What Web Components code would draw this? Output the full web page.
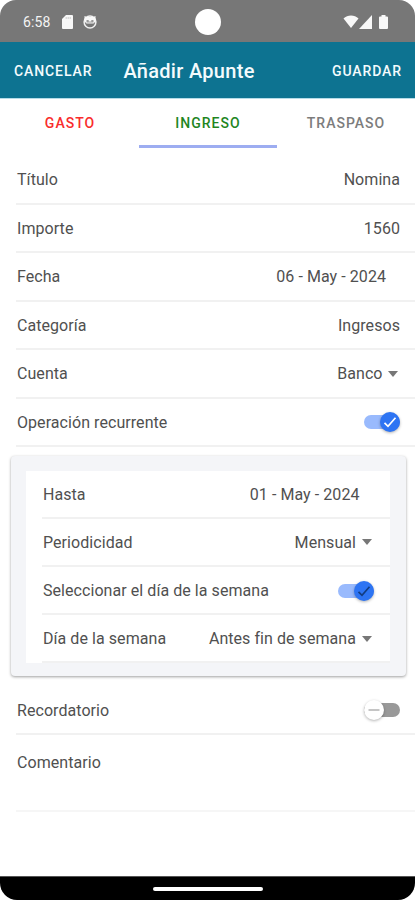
<!DOCTYPE html>
<html lang="es">
<head>
<meta charset="utf-8">
<title>Añadir Apunte</title>
<style>
  body {
    margin: 0;
    background: #fff;
    font-family: Roboto, sans-serif;
  }
</style>
</head>
<body>
<entry-page></entry-page>

<script>
customElements.define('status-bar', class StatusBar extends HTMLElement {
  constructor() {
    super();
    this.attachShadow({mode: 'open'});
    this.shadowRoot.innerHTML = this.template;
  }

  get template() {
    return `
<style>
  :host {
    display: grid;
    grid-template-columns: 1fr 26px 1fr;
    align-items: center;
    box-sizing: border-box;
    height: 42px;
    padding: 1px 26px 0 23px;
    background: #777;
    color: #f4f4f4;
    border-radius: 16px 16px 0 0;
  }
  .left, .right {
    display: flex;
    align-items: center;
  }
  .right {
    justify-content: flex-end;
  }
  time {
    font-size: 14px;
    letter-spacing: .1px;
    width: 39px;
  }
  i {
    width: 26px;
    height: 26px;
    margin-left: 2px;
    border-radius: 50%;
    background: #fff;
  }
  svg {
    display: block;
    fill: #f8f8f8;
  }
</style>
<div class="left">
  <time>6:58</time>
  <svg width="11" height="14" viewBox="0 0 11 14"><path d="M4 0h6a1 1 0 0 1 1 1v12a1 1 0 0 1-1 1H1a1 1 0 0 1-1-1V4z"/><path d="M4.200 2v2M6.200 2v2M8.200 2v2" stroke="#bbb" stroke-width=".7"/></svg>
  <svg style="margin-left: 10px" width="14" height="14" viewBox="0 0 14 14"><circle cx="7" cy="7" r="5.900" fill="none" stroke="#f0f0f0" stroke-width="1.500"/><path d="M1.500 1l2.500 1h6l2.500-1v5.500l-2 2h-7l-2-2z"/><path d="M3.500 5h2.200v1.500h2.600V5h2.200v2.500h-7z" fill="#999"/></svg>
</div>
<i></i>
<div class="right">
  <svg width="16" height="14" viewBox="0 0 16 14"><path d="M.5 3.500C4.500-.4 11.500-.4 15.500 3.500L8 13z"/></svg>
  <svg width="13" height="14" viewBox="0 0 13 14"><path d="M13 0v14H0z"/></svg>
  <svg style="margin: 0 1px 0 7px" width="9" height="14" viewBox="0 0 9 14"><path d="M2.500 0h4v1.500H8a1 1 0 0 1 1 1V13a1 1 0 0 1-1 1H1a1 1 0 0 1-1-1V2.500a1 1 0 0 1 1-1h1.500z"/></svg>
</div>
    `
  }
});

customElements.define('title-bar', class TitleBar extends HTMLElement {
  constructor() {
    super();
    this.attachShadow({mode: 'open'});
    this.shadowRoot.innerHTML = this.template;
  }

  get template() {
    return `
<style>
  :host {
    display: flex;
    align-items: center;
    box-sizing: border-box;
    height: 57px;
    padding: 2px 13px 0 14px;
    background: #0d7391;
    border-bottom: 1px solid #b5dce8;
    color: #f4fbfd;
    font-size: 14px;
    font-weight: 500;
    letter-spacing: .9px;
  }
  h1 {
    flex: 1;
    margin: 0 0 0 31px;
    font-size: 20px;
    font-weight: 500;
    letter-spacing: .3px;
  }
</style>
<slot name="start"></slot>
<h1><slot></slot></h1>
<slot name="end"></slot>
    `
  }
});

customElements.define('segment-button', class SegmentButton extends HTMLElement {
  constructor() {
    super();
    this.attachShadow({mode: 'open'});
    this.shadowRoot.innerHTML = this.template;
  }

  get template() {
    return `
<style>
  :host {
    flex: 1;
    display: flex;
    align-items: center;
    justify-content: center;
    box-sizing: border-box;
    padding-top: 2px;
    border-bottom: 3px solid transparent;
    color: #7c7c7c;
    font-size: 14px;
    font-weight: 500;
    letter-spacing: 1px;
  }
  :host([checked]) {
    border-color: #9dadf1;
  }
  :host([color="red"]) {
    color: #f92c2c;
  }
  :host([color="green"]) {
    color: #1f861f;
  }
</style>
<slot></slot>
    `
  }
});

customElements.define('toggle-switch', class ToggleSwitch extends HTMLElement {
  constructor() {
    super();
    this.attachShadow({mode: 'open'});
    this.shadowRoot.innerHTML = this.template;
  }

  get template() {
    return `
<style>
  :host {
    display: flex;
    align-items: center;
    width: 36px;
    height: 14px;
    border-radius: 7px;
    background: #999;
    --mark: #bbb;
  }
  .knob {
    width: 20px;
    height: 20px;
    flex: none;
    border-radius: 50%;
    background: #fff;
    box-shadow: 0 1px 3px rgba(0,0,0,.3);
  }
  :host([checked]) {
    justify-content: flex-end;
    background: #99bafd;
    --mark: #fff;
  }
  :host([checked]) .knob {
    background: #2d74f3;
  }
  :host([dark]) {
    --mark: #123c80;
  }
  svg {
    display: block;
    fill: none;
    stroke: var(--mark);
    stroke-width: 1.7;
  }
</style>
<div class="knob">
  <svg width="20" height="20" viewBox="0 0 20 20"><path d="${this.hasAttribute('checked') ? 'M4.500 10.800l3.500 3.500 7.500-8.600' : 'M4.500 10h11'}"/></svg>
</div>
    `
  }
});

customElements.define('form-row', class FormRow extends HTMLElement {
  constructor() {
    super();
    this.attachShadow({mode: 'open'});
    this.shadowRoot.innerHTML = this.template;
  }

  get template() {
    return `
<style>
  :host {
    display: flex;
    align-items: center;
    justify-content: space-between;
    box-sizing: border-box;
    height: 48.5px;
    margin-left: 16px;
    padding: 1px var(--row-end, 15px) 0 1px;
    border-bottom: 2px solid #f1f1f1;
    color: #505050;
    font-size: 16px;
    letter-spacing: .06px;
  }
  :host([date]) {
    padding-right: calc(var(--row-end, 15px) + 14px);
  }
  :host([tall]) {
    height: 77px;
    align-items: flex-start;
    padding-top: 18px;
    border-color: #f6f6f6;
  }
  .value {
    display: flex;
    align-items: center;
  }
  svg {
    display: none;
    margin: 0 2px 0 5.5px;
    fill: #777;
  }
  :host([select]) svg {
    display: block;
  }
</style>
<span>${this.getAttribute('label')}</span>
<span class="value"><slot></slot><svg width="10" height="6" viewBox="0 0 10 6"><path d="M0 0h10L5 6z"/></svg></span>
    `
  }
});

customElements.define('form-card', class FormCard extends HTMLElement {
  constructor() {
    super();
    this.attachShadow({mode: 'open'});
    this.shadowRoot.innerHTML = this.template;
  }

  get template() {
    return `
<style>
  :host {
    display: block;
    margin: 8.5px 9px 10.3px 11px;
    padding: 15px 16px 13px 15px;
    background: #f4f5f8;
    border-radius: 4px;
    box-shadow: 0 1px 3px rgba(0,0,0,.38);
    --row-end: 16.5px;
  }
  div {
    display: flex;
    flex-direction: column;
    justify-content: flex-end;
    height: 192.7px;
    background: #fff;
    overflow: hidden;
  }
</style>
<div><slot></slot></div>
    `
  }
});

customElements.define('navigation-bar', class NavigationBar extends HTMLElement {
  constructor() {
    super();
    this.attachShadow({mode: 'open'});
    this.shadowRoot.innerHTML = this.template;
  }

  get template() {
    return `
<style>
  :host {
    display: flex;
    align-items: center;
    justify-content: center;
    box-sizing: border-box;
    height: 24px;
    border-top: 1px solid #555;
    background: #000;
    border-radius: 0 0 17px 17px;
  }
  i {
    width: 110px;
    height: 4px;
    border-radius: 2px;
    background: #fff;
  }
</style>
<i></i>
    `
  }
});

customElements.define('entry-page', class EntryPage extends HTMLElement {
  constructor() {
    super();
    this.attachShadow({mode: 'open'});
    this.shadowRoot.innerHTML = this.template;
  }

  get template() {
    return `
<style>
  :host {
    display: flex;
    flex-direction: column;
    width: 415px;
    height: 900px;
    overflow: hidden;
  }
  nav {
    display: flex;
    height: 49px;
    padding-left: 1px;
  }
  main {
    flex: 1;
    padding-top: 8.2px;
  }
</style>
<status-bar></status-bar>
<title-bar>
  <span slot="start">CANCELAR</span>
  Añadir Apunte
  <span slot="end">GUARDAR</span>
</title-bar>
<nav>
  <segment-button color="red">GASTO</segment-button>
  <segment-button color="green" checked>INGRESO</segment-button>
  <segment-button>TRASPASO</segment-button>
</nav>
<main>
  <form-row label="Título">Nomina</form-row>
  <form-row label="Importe">1560</form-row>
  <form-row label="Fecha" date>06 - May - 2024</form-row>
  <form-row label="Categoría">Ingresos</form-row>
  <form-row label="Cuenta" select>Banco</form-row>
  <form-row label="Operación recurrente"><toggle-switch checked></toggle-switch></form-row>
  <form-card>
    <form-row label="Hasta" date>01 - May - 2024</form-row>
    <form-row label="Periodicidad" select>Mensual</form-row>
    <form-row label="Seleccionar el día de la semana"><toggle-switch checked dark></toggle-switch></form-row>
    <form-row label="Día de la semana" select>Antes fin de semana</form-row>
  </form-card>
  <form-row label="Recordatorio"><toggle-switch></toggle-switch></form-row>
  <form-row label="Comentario" tall></form-row>
</main>
<navigation-bar></navigation-bar>
    `
  }
});
</script>
</body>
</html>
